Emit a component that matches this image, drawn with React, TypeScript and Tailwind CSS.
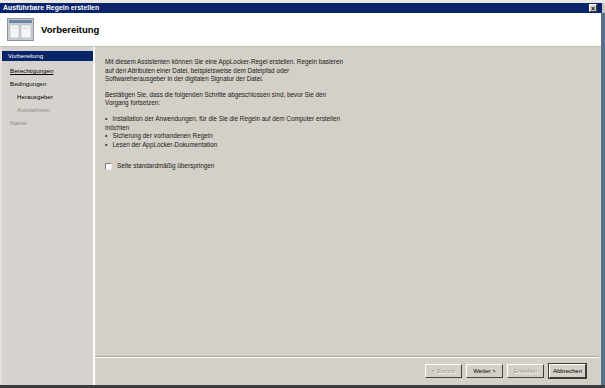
import React from 'react';

const navItems = [
  { label: 'Berechtigungen', cls: 'pl-[8px] text-black underline', mt: 'mt-[5px]' },
  { label: 'Bedingungen', cls: 'pl-[8px] text-black', mt: 'mt-[3px]' },
  { label: 'Herausgeber', cls: 'pl-[15px] text-black', mt: 'mt-[3px]' },
  { label: 'Ausnahmen', cls: 'pl-[15px] text-[#8c8a86]', mt: 'mt-[3px]' },
  { label: 'Name', cls: 'pl-[8px] text-[#8c8a86]', mt: 'mt-[3px]' },
];

const WizardIcon: React.FC = () => (
  <svg width="27" height="23" viewBox="0 0 27 23">
    <rect x="0.5" y="0.5" width="26" height="22" fill="#c9ccd2" stroke="#8d939c" />
    <rect x="2" y="2" width="23" height="3" fill="#6a86a8" />
    <rect x="3" y="7" width="9" height="13" fill="#f4f5f7" stroke="#b3b8c0" strokeWidth="0.6" />
    <rect x="14" y="7" width="10" height="13" fill="#f4f5f7" stroke="#b3b8c0" strokeWidth="0.6" />
    <line x1="5" y1="10" x2="10" y2="10" stroke="#c8ccd4" strokeWidth="0.6" />
    <line x1="16" y1="10" x2="22" y2="10" stroke="#c8ccd4" strokeWidth="0.6" />
  </svg>
);

const WinButton: React.FC<{ label: string; disabled?: boolean }> = ({ label, disabled }) => (
  <div className="w-[37px] h-[14px] bg-[#d4d0c8] border border-t-white border-l-white border-r-[#404040] border-b-[#404040] flex items-center justify-center">
    <span
      className={
        disabled
          ? 'text-[6px] leading-none text-[#9a978f] [text-shadow:1px_1px_0_#ffffff]'
          : 'text-[6px] leading-none text-black'
      }
    >
      {label}
    </span>
  </div>
);

export default function App() {
  return (
    <div
      className="w-[605px] h-[388px] bg-[#d4d0c8] flex flex-col overflow-hidden"
      style={{ fontFamily: '"Liberation Sans", Arial, sans-serif' }}
    >
      {/* top edge */}
      <div className="h-[3px] bg-[#e9e8e4]" />

      {/* title bar */}
      <div className="h-[10px] bg-[#0a246a] flex items-center justify-between pl-[3px] pr-[5px] border-r-[3px] border-r-[#c9c7c1]">
        <span className="text-[6.9px] font-bold text-white leading-none">Ausführbare Regeln erstellen</span>
        <div className="w-[8px] h-[8px] bg-[#d4d0c8] border-[0.5px] border-t-white border-l-white border-r-[#404040] border-b-[#404040] flex items-center justify-center">
          <span className="text-[7px] font-bold leading-none text-black">×</span>
        </div>
      </div>

      <div className="flex-1 flex flex-col border-r-[4px] border-r-[#59708c]">
        {/* header */}
        <div className="h-[34px] bg-white flex items-center pl-[7px] gap-[7px] border-b border-b-[#c4c1b9]">
          <WizardIcon />
          <span className="text-[9.5px] font-bold text-black leading-none">Vorbereitung</span>
        </div>

        {/* body */}
        <div className="flex-1 flex">
          {/* nav */}
          <div className="w-[93px] bg-[#d6d3ce] border-l-[2px] border-l-[#e3e1dc] pt-[4px] flex flex-col text-[6.2px] leading-none">
            <div className="h-[10px] bg-[#0a246a] text-white flex items-center pl-[6px]">Vorbereitung</div>
            {navItems.map((item) => (
              <div key={item.label} className={`h-[10px] flex items-center ${item.cls} ${item.mt}`}>
                {item.label}
              </div>
            ))}
          </div>
          <div className="w-[2px] bg-white" />

          {/* content */}
          <div className="flex-1 flex flex-col">
            <div className="flex-1 pl-[10px] pt-[11px] text-[6.35px] leading-[8.6px] text-[#1a1a1a]">
              <p>
                Mit diesem Assistenten können Sie eine AppLocker-Regel erstellen. Regeln basieren
                <br />
                auf den Attributen einer Datei, beispielsweise dem Dateipfad oder
                <br />
                Softwareherausgeber in der digitalen Signatur der Datei.
              </p>
              <p className="mt-[7px]">
                Bestätigen Sie, dass die folgenden Schritte abgeschlossen sind, bevor Sie den
                <br />
                Vorgang fortsetzen:
              </p>
              <ul className="mt-[7px] w-[252px]">
                <li>•&nbsp;&nbsp;&nbsp;Installation der Anwendungen, für die Sie die Regeln auf dem Computer erstellen möchten</li>
                <li>•&nbsp;&nbsp;&nbsp;Sicherung der vorhandenen Regeln</li>
                <li>•&nbsp;&nbsp;&nbsp;Lesen der AppLocker-Dokumentation</li>
              </ul>
              <div className="mt-[13px] flex items-center gap-[5px]">
                <div className="w-[7px] h-[7px] bg-white border border-t-[#808080] border-l-[#808080] border-r-[#e8e8e8] border-b-[#e8e8e8]" />
                <span>Seite standardmäßig überspringen</span>
              </div>
            </div>
            <div className="h-[2px] border-t border-t-[#a9a59d] bg-white mr-[2px]" />
            <div className="h-[27px] flex items-center justify-end gap-[4px] pr-[14px] pb-[1px]">
              <WinButton label="< Zurück" disabled />
              <WinButton label="Weiter >" />
              <WinButton label="Erstellen" disabled />
              <div className="border border-[#3a3a3a]">
                <WinButton label="Abbrechen" />
              </div>
            </div>
          </div>
        </div>
      </div>

      {/* bottom edge */}
      <div className="h-[3px] bg-[#3c3c3c]" />
    </div>
  );
}
